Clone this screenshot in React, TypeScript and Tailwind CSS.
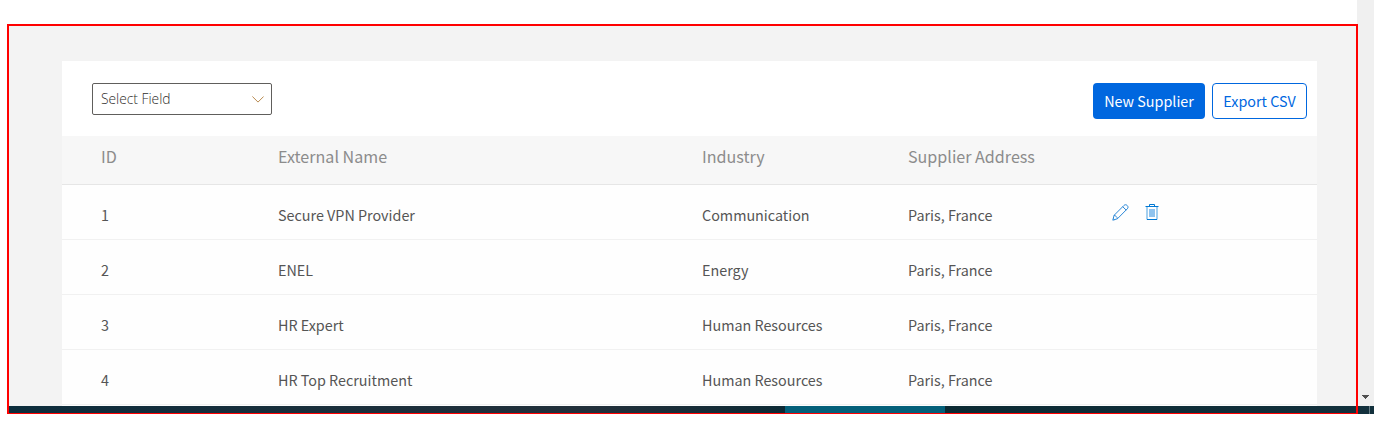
const rows = [
  { id: 1, name: 'Secure VPN Provider', industry: 'Communication', address: 'Paris, France' },
  { id: 2, name: 'ENEL', industry: 'Energy', address: 'Paris, France' },
  { id: 3, name: 'HR Expert', industry: 'Human Resources', address: 'Paris, France' },
  { id: 4, name: 'HR Top Recruitment', industry: 'Human Resources', address: 'Paris, France' },
];

function PencilIcon() {
  return (
    <svg width="18" height="18" viewBox="0.5 0.5 18 18" fill="none" stroke="#2b88d8" strokeWidth="1">
      <path d="M1.3 16.7 2.6 11.8 12.4 2C13.4 1 14.6 1 15.6 1.9 16.8 3 16.8 4.3 15.8 5.3L6 15.2 1.3 16.7Z" />
      <path d="M11.2 3.2 14.7 6.6M2.6 11.8C4 12 5.7 13.5 6 15.2M1.8 15 3 16.2" />
    </svg>
  );
}

function TrashIcon() {
  return (
    <svg width="14" height="17" viewBox="0 0 14 17" fill="none">
      <path d="M.5 2.5H13.5M4.5 2.5V.5H9.5V2.5" stroke="#0078d4" />
      <path d="M2 3V15.5H12V3" stroke="#4aa0e0" />
      <path d="M2 15.5H12" stroke="#0078d4" />
      <path d="M4 5H10V13H4Z" fill="#8fc3ee" />
    </svg>
  );
}

export default function App() {
  return (
    <div className="h-[439px] w-full overflow-hidden bg-white font-['Noto_Sans_CJK_SC',sans-serif] text-[#555555]">
      <div className="relative h-[414px] w-[1374px]">
        <div className="flex h-[406px]">
          <div className="flex w-[1357px] flex-col pl-[9px] pt-[26px]">
            <main className="flex-1 bg-[#f3f3f3] pl-[53px] pr-10 pt-[35px]">
              <section className="h-[345px] bg-[#fefefe]">
                <div className="flex h-[75px] items-start justify-between bg-white pl-[30px] pr-[10px] pt-[22px]">
                  <button className="flex h-8 w-[180px] items-center justify-between rounded-[2px] border border-[#605e5c] pl-2 pr-[7px] font-['Open_Sans',sans-serif] text-[13.8px] font-light text-[#2f2d2b]">
                    <span>Select Field</span>
                    <svg width="12" height="7" viewBox="0 0 12 7" fill="none" stroke="#b88a50">
                      <path d="M.4.5 6 6.1 11.6.5" />
                    </svg>
                  </button>
                  <div className="flex gap-[7px] text-[14.35px] leading-6">
                    <button className="h-9 w-28 rounded-[4px] bg-[#0067df] text-white">New Supplier</button>
                    <button className="h-9 w-[95px] rounded-[4px] border border-[#0067df] text-[#0067df]">Export CSV</button>
                  </div>
                </div>
                <div className="grid h-[49px] grid-cols-[177px_424px_206px_1fr] border-b border-[#e6e6e6] bg-[#f7f7f7] pl-[39px] pt-2 text-[16.1px] leading-6 text-[#8c8c8c]">
                  <span>ID</span>
                  <span>External Name</span>
                  <span>Industry</span>
                  <span>Supplier Address</span>
                </div>
                {rows.map((r) => (
                  <div key={r.id} className="grid h-[55px] grid-cols-[177px_424px_206px_204px_1fr] border-b border-[#f1f1f1] pl-[39px] pt-[18px] text-[14.35px] leading-6">
                    <span>{r.id}</span>
                    <span>{r.name}</span>
                    <span>{r.industry}</span>
                    <span>{r.address}</span>
                    {r.id === 1 && (
                      <span className="flex items-start gap-[15px] pt-px">
                        <PencilIcon />
                        <TrashIcon />
                      </span>
                    )}
                  </div>
                ))}
              </section>
            </main>
          </div>
          <div className="flex w-[17px] items-end justify-center bg-[#f0f0f0] pb-[7px]">
            <svg width="7" height="4" viewBox="0 0 7 4" fill="#505050" shapeRendering="crispEdges">
              <path d="M0 0H7V1H6V2H5V3H4V4H3V3H2V2H1V1H0Z" />
            </svg>
          </div>
        </div>
        <div className="ml-[9px] flex h-2">
          <div className="w-[776px] bg-linear-to-r from-[#0c2d3c] via-[#22303b] via-75% to-[#0c2a35]" />
          <div className="w-40 bg-[#04607a]" />
          <div className="w-[424px] bg-linear-to-r from-[#0b2a33] to-[#12303c]" />
          <div className="w-px bg-[#647b84]" />
          <div className="flex-1 bg-[#12303c]" />
        </div>
        <div className="absolute left-[7px] top-6 h-[390px] w-[1351px] border-2 border-b border-[#ff0000]" />
      </div>
    </div>
  );
}
